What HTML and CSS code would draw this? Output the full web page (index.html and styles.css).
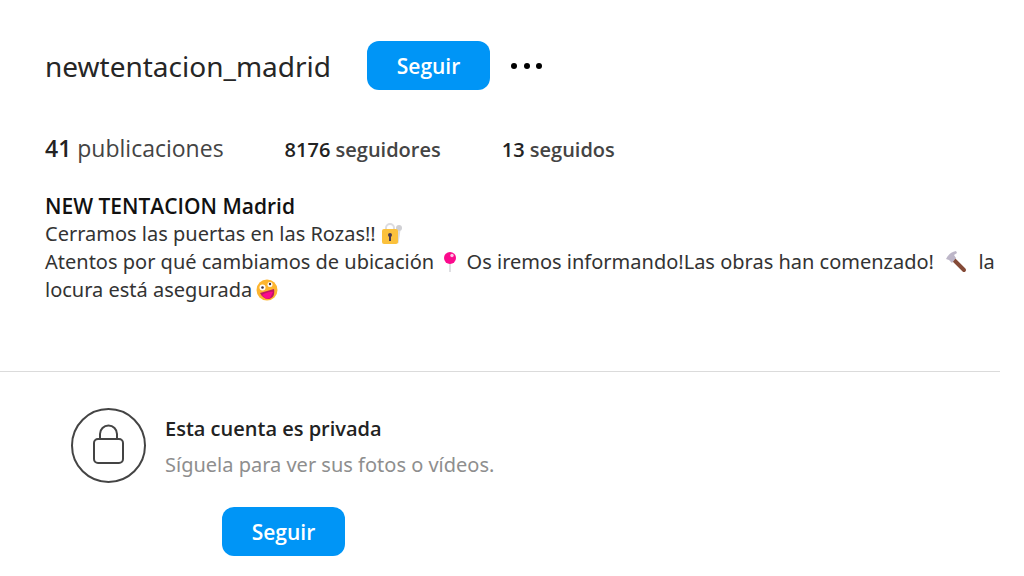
FILE: index.html
```html
<!DOCTYPE html>
<html lang="es">
<head>
    <meta charset="utf-8">
    <meta name="viewport" content="width=device-width, initial-scale=1">
    <title>newtentacion_madrid</title>
    <link rel="stylesheet" href="styles.css">
</head>
<body>
    <header class="profile">
        <div class="profile-top">
            <h1 class="username">newtentacion_madrid</h1>
            <button class="follow-btn" type="button">Seguir</button>
            <button class="more-btn" type="button" aria-label="Opciones">
                <svg width="34" height="8" viewBox="0 0 34 8">
                    <circle cx="4" cy="4" r="3"/>
                    <circle cx="17" cy="4" r="3"/>
                    <circle cx="29" cy="4" r="3"/>
                </svg>
            </button>
        </div>

        <ul class="stats">
            <li class="stat posts"><b>41</b> publicaciones</li>
            <li class="stat"><b>8176</b> seguidores</li>
            <li class="stat"><b>13</b> seguidos</li>
        </ul>

        <div class="bio">
            <h2 class="bio-name">NEW TENTACION Madrid</h2>
            <p>Cerramos las puertas en las Rozas!!
                <svg class="emoji" viewBox="0 0 22 22">
                    <path d="M5 9V5a4 4 0 0 1 8 0v4" fill="none" stroke="#dcdce0" stroke-width="2"/>
                    <path d="M18 7l-2 13" stroke="#dcdce0" stroke-width="3"/>
                    <circle cx="18" cy="5" r="3" fill="#d0d0d4"/>
                    <rect x="1" y="6" width="16" height="15" rx="2" fill="#fbc13c"/>
                    <circle cx="9" cy="12" r="2" fill="#4b3a50"/>
                    <path d="M9 12v6" stroke="#4b3a50" stroke-width="2"/>
                </svg>
            </p>
            <p>Atentos por qué cambiamos de ubicación
                <svg class="emoji pin" viewBox="0 0 14 22">
                    <path d="M7 11v10" stroke="#d5d5da" stroke-width="1.5"/>
                    <circle cx="7" cy="7" r="6" fill="#fb0a8d"/>
                    <circle cx="9" cy="4.500" r="1.700" fill="#ffc4e4"/>
                </svg>
                Os iremos informando!Las obras han comenzado!
                <svg class="emoji hammer" viewBox="0 0 22 22">
                    <path d="M8 8l11 11" stroke="#844a37" stroke-width="4" stroke-linecap="round"/>
                    <path d="M1 8C3 4 6 1 11 0l1 2-3 2 2 3-4 5-3-3z" fill="#bdb6c8"/>
                </svg>
                <span>la</span>
                <span>locura está asegurada</span><svg class="emoji face" viewBox="0 0 22 22">
                    <circle cx="11" cy="11" r="10.500" fill="#fdb52f"/>
                    <path d="M4 14l14-4c1 6-1 9-5 10-4 0-7-2-9-6z" fill="#bd1762"/>
                    <path d="M6 16c3-2 9-4 11-3l-3 6-4 1z" fill="#fb0a8d"/>
                    <circle cx="6.500" cy="8.500" r="3" fill="#fff"/>
                    <circle cx="14" cy="5.500" r="2.500" fill="#fff"/>
                    <circle cx="6.500" cy="8.500" r="1.300" fill="#403040"/>
                    <circle cx="14" cy="5" r="1.200" fill="#403040"/>
                </svg>
            </p>
        </div>
    </header>

    <main class="private">
        <div class="private-info">
            <svg class="lock" width="76" height="76" viewBox="0 0 76 76" fill="none" stroke="#444" stroke-width="2">
                <circle cx="37.500" cy="37.500" r="36.500"/>
                <rect x="23" y="31" width="29" height="24" rx="4"/>
                <path d="M29 31v-5a8.500 8.500 0 0 1 17 0v5"/>
            </svg>
            <div>
                <h2 class="private-title">Esta cuenta es privada</h2>
                <p class="private-text">Síguela para ver sus fotos o vídeos.</p>
            </div>
        </div>
        <button class="follow-btn" type="button">Seguir</button>
    </main>
</body>
</html>
```

FILE: styles.css
```css
* {
    box-sizing: border-box;
}
body {
    margin: 0;
    background-color: #fff;
    color: #333;
    font-family: "Noto Sans", "Open Sans", sans-serif;
    font-size: 20px;
    line-height: 28px;
}
h1, h2, p, ul {
    margin: 0;
    padding: 0;
}

/* Perfil */
.profile {
    margin-right: 24px;
    padding: 41px 0 67px 45px;
    border-bottom: 1px solid #dbdbdb;
}
.profile-top {
    display: flex;
    align-items: center;
}
.username {
    margin-right: 36px;
    color: #262626;
    font-size: 28px;
    font-weight: 400;
    line-height: 48px;
}
.follow-btn {
    width: 123px;
    height: 49px;
    padding: 0;
    border: none;
    border-radius: 12px;
    background-color: #0095f6;
    color: #fff;
    font-family: "Open Sans", sans-serif;
    font-size: 21px;
    font-weight: 600;
    cursor: pointer;
}
.follow-btn:hover {
    background-color: #1877f2;
}
.more-btn {
    display: flex;
    margin-left: 20px;
    padding: 0;
    border: none;
    background: none;
    cursor: pointer;
}

.stats {
    display: flex;
    align-items: baseline;
    gap: 61px;
    margin-top: 44px;
    list-style: none;
}
.stat {
    font-family: "Open Sans", sans-serif;
    font-size: 20px;
    font-weight: 600;
    color: #444;
}
.stat b {
    font-weight: 600;
    color: #222;
}
.posts {
    font-size: 23px;
    font-weight: 400;
}

.bio {
    margin-top: 28px;
}
.bio-name {
    color: #111;
    font-family: "Open Sans", sans-serif;
    font-size: 21px;
    font-weight: 600;
}
.emoji {
    width: 22px;
    height: 22px;
    vertical-align: -4px;
}
.pin {
    width: 14px;
    margin: 0 4px;
}
.hammer {
    margin: 0 6px;
}
.face {
    margin-left: 4px;
}

/* Cuenta privada */
.private {
    padding: 36px 0 20px 71px;
}
.private-info {
    display: flex;
    gap: 18px;
}
.private-title {
    margin-top: 7px;
    color: #222;
    font-family: "Open Sans", sans-serif;
    font-size: 20px;
    font-weight: 600;
}
.private-text {
    margin-top: 8px;
    color: #8e8e8e;
}
.private .follow-btn {
    display: block;
    margin: 23px 0 0 151px;
}
```
